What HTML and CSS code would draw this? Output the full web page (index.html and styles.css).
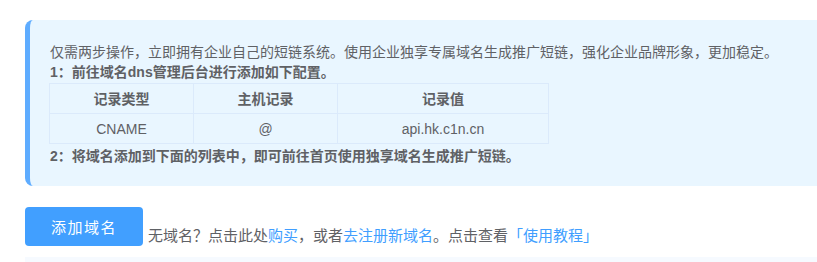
FILE: index.html
```html
<!DOCTYPE html>
<html lang="zh-CN">
<head>
  <meta charset="UTF-8" />
  <title>自定义域名</title>
  <link rel="stylesheet" href="styles.css">
</head>
<body>
  <main class="page">
    <div class="tip">
      <p>仅需两步操作，立即拥有企业自己的短链系统。使用企业独享专属域名生成推广短链，强化企业品牌形象，更加稳定。</p>
      <p class="step">1：前往域名dns管理后台进行添加如下配置。</p>
      <table class="dns">
        <thead>
          <tr><th>记录类型</th><th>主机记录</th><th>记录值</th></tr>
        </thead>
        <tbody>
          <tr><td>CNAME</td><td>@</td><td>api.hk.c1n.cn</td></tr>
        </tbody>
      </table>
      <p class="step">2：将域名添加到下面的列表中，即可前往首页使用独享域名生成推广短链。</p>
    </div>

    <div class="actions">
      <button class="add-btn">添加域名</button>
      <span class="hint">无域名？点击此处<a href="#">购买</a>，或者<a href="#">去注册新域名</a>。点击查看<a href="#">「使用教程」</a></span>
    </div>

    <div class="list-head"></div>
  </main>
</body>
</html>
```

FILE: styles.css
```css
* { box-sizing: border-box; }
body {
  margin: 0;
  font-family: "Liberation Sans", "Noto Sans CJK SC", sans-serif;
  color: #5f6165;
  background: #fff;
  overflow: hidden;
}
.page {
  padding: 20px 0 0 25px;
}
.tip {
  background-color: #e9f6ff;
  border-left: 5px solid #5eacff;
  border-radius: 8px 0 0 8px;
  padding: 22px 0 20px 20px;
  margin-right: -10px;
  font-size: 14px;
  line-height: 20px;
}
.tip p {
  margin: 0;
}
.tip .step {
  font-weight: bold;
}
table.dns {
  border-collapse: collapse;
  margin: 1px 0 2px -1px;
  width: 500px;
}
.dns th, .dns td {
  border: 1px solid #dbeafb;
  height: 30px;
  padding: 0;
  text-align: center;
  font-size: 14px;
}
.dns th:nth-child(1), .dns th:nth-child(2) {
  width: 144px;
}
.actions {
  margin-top: 21px;
  display: flex;
  align-items: flex-end;
  gap: 5px;
}
.add-btn {
  width: 118px;
  height: 39px;
  background-color: #419fff;
  color: #fff;
  border: none;
  border-radius: 4px;
  font-family: inherit;
  font-size: 15px;
  letter-spacing: 1.5px;
  cursor: pointer;
}
.hint {
  font-size: 15px;
  line-height: 20px;
}
.hint a {
  color: #409eff;
  text-decoration: none;
}
.list-head {
  margin-top: 11px;
  height: 20px;
  background-color: #f6faff;
}
```
